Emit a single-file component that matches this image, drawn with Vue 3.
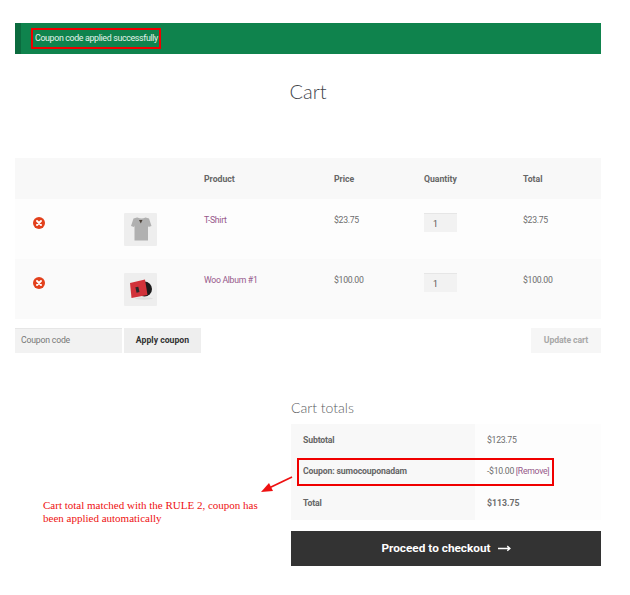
<template>
  <div class="page">
    <div class="notice">
      <span class="notice-text">Coupon code applied successfully</span>
    </div>

    <h1 class="title">Cart</h1>

    <div class="cart">
      <div class="row head">
        <div></div>
        <div></div>
        <div>Product</div>
        <div>Price</div>
        <div>Quantity</div>
        <div>Total</div>
      </div>
      <div v-for="item in items" :key="item.name" class="row item">
        <div>
          <svg class="remove" viewBox="0 0 12 12">
            <circle cx="6" cy="6" r="6" fill="#e2401c" />
            <path d="M4 4l4 4M8 4l-4 4" stroke="#fff" stroke-width="1.9" stroke-linecap="round" />
          </svg>
        </div>
        <div>
          <svg v-if="item.thumb == 'shirt'" class="thumb" viewBox="0 0 33 33">
            <rect width="33" height="33" rx="1" fill="#eeeeee" />
            <path d="M13 4.500l-3.500 1-2.500 7.500 3 1 .5-1.500v15h13.500v-15l.5 1.500 3-1-2.500-7.500-3.500-1q-4 1.800-8 0z" fill="#b0b0b0" />
            <path d="M15 7h3.500l-1.700 3.500z" fill="#4a4038" />
          </svg>
          <svg v-else class="thumb" viewBox="0 0 33 33">
            <rect width="33" height="33" rx="1" fill="#eeeeee" />
            <ellipse cx="20" cy="25.500" rx="9" ry="1.200" fill="#dedede" />
            <circle cx="20.500" cy="16" r="7.500" fill="#1c1a1b" />
            <path d="M6 10l15-3.500 2.500 15.500-16 3z" fill="#d1323a" />
            <rect x="12" y="14" width="3" height="5.500" fill="#2c2a2b" transform="rotate(-12 13 17)" />
          </svg>
        </div>
        <div><a class="link">{{ item.name }}</a></div>
        <div>{{ item.price }}</div>
        <div><span class="qty">1</span></div>
        <div>{{ item.price }}</div>
      </div>
    </div>

    <div class="actions">
      <div class="coupon">
        <span class="coupon-input">Coupon code</span>
        <span class="btn apply">Apply coupon</span>
      </div>
      <span class="btn update">Update cart</span>
    </div>

    <div class="bottom">
      <p class="note">Cart total matched with the RULE 2, coupon has been applied automatically</p>
      <div class="totals">
        <h2 class="totals-title">Cart totals</h2>
        <div class="totals-table">
          <div class="totals-row">
            <div class="label">Subtotal</div>
            <div class="value">$123.75</div>
          </div>
          <div class="totals-row">
            <div class="label">Coupon: sumocouponadam</div>
            <div class="value">-$10.00 <a class="link">[Remove]</a></div>
          </div>
          <div class="totals-row">
            <div class="label">Total</div>
            <div class="value strong">$113.75</div>
          </div>
          <div class="coupon-mark"></div>
        </div>
        <div class="checkout">
          Proceed to checkout
          <svg class="arrow" viewBox="0 0 14 8">
            <path d="M0 4.500h12.500M10 2l2.800 2.500-2.800 2.500" fill="none" stroke="#fff" stroke-width="1.500" />
          </svg>
        </div>
      </div>
    </div>

    <svg class="pointer" viewBox="0 0 32 17">
      <path d="M31 1L8 12" stroke="#ee1111" stroke-width="1.800" />
      <path d="M0 16l12-1-4-8z" fill="#ee1111" />
    </svg>
  </div>
</template>

<script setup>
const items = [
  { name: "T-Shirt", price: "$23.75", thumb: "shirt" },
  { name: "Woo Album #1", price: "$100.00", thumb: "album" },
];
</script>

<style>
html, body {
  background: #fff;
}
</style>

<style scoped>
.page {
  position: relative;
  box-sizing: border-box;
  width: 630px;
  height: 595px;
  padding: 23px 29px 0 15px;
  font-family: Roboto, Lato, sans-serif;
  font-size: 8.700px;
  letter-spacing: -0.3px;
  color: #6d6d6d;
  overflow: hidden;
}
.notice {
  display: flex;
  align-items: center;
  height: 31px;
  box-sizing: border-box;
  padding-left: 10px;
  background: #0f834d;
  border-left: 6px solid #0b6b3e;
}
.notice-text {
  box-sizing: border-box;
  width: 130px;
  padding: 2px;
  border: 2.500px solid #f00000;
  color: #e6f3ec;
  font-size: 8.800px;
  letter-spacing: -0.33px;
  line-height: 13px;
  white-space: nowrap;
}
.title {
  margin: 24px 0 0;
  height: 80px;
  text-align: center;
  font-family: Lato, sans-serif;
  font-size: 20px;
  letter-spacing: 0;
  line-height: 26px;
  font-weight: 300;
  color: #43454b;
}
.row {
  display: grid;
  grid-template-columns: 91px 80px 130px 90px 99px 96px;
}
.row > div {
  padding-left: 18px;
}
.head {
  height: 41px;
  align-items: center;
  background: #f8f8f8;
  font-weight: 700;
  letter-spacing: 0;
  color: #666;
}
.item {
  height: 60px;
  background: #fdfdfd;
  padding-top: 14px;
  box-sizing: border-box;
}
.item:last-child {
  background: #fafafa;
}
.item > div {
  line-height: 14px;
}
.remove {
  display: block;
  width: 12px;
  height: 12px;
  margin-top: 4px;
}
.thumb {
  display: block;
  width: 33px;
  height: 33px;
}
.link {
  color: #96588a;
}
.qty {
  display: block;
  box-sizing: border-box;
  width: 33px;
  height: 19px;
  padding-left: 9px;
  line-height: 20px;
  background: #f2f2f2;
  border-top: 1px solid #e6e6e6;
  color: #555;
}
.actions {
  display: flex;
  justify-content: space-between;
  margin-top: 9px;
}
.coupon {
  display: flex;
  gap: 2px;
}
.coupon-input {
  box-sizing: border-box;
  width: 107px;
  height: 25px;
  padding-left: 6px;
  line-height: 23px;
  background: #f2f2f2;
  border-top: 1px solid #e6e6e6;
  letter-spacing: -0.2px;
  color: #777;
}
.btn {
  box-sizing: border-box;
  height: 25px;
  line-height: 25px;
  text-align: center;
  font-weight: 700;
  letter-spacing: 0;
}
.apply {
  width: 77px;
  background: #eeeeee;
  color: #333;
}
.update {
  width: 70px;
  background: #f6f6f6;
  color: #a8a8a8;
  letter-spacing: -0.1px;
}
.bottom {
  display: flex;
  justify-content: space-between;
  margin-top: 46px;
}
.note {
  width: 225px;
  margin: 100px 0 0 28px;
  font-family: "Liberation Serif", serif;
  font-size: 11px;
  letter-spacing: 0;
  line-height: 13px;
  color: #ee1111;
}
.totals {
  width: 310px;
}
.totals-title {
  margin: 0;
  height: 25px;
  font-family: Lato, sans-serif;
  font-size: 14px;
  letter-spacing: 0;
  line-height: 18px;
  font-weight: 300;
  color: #5a5c61;
}
.totals-table {
  position: relative;
}
.totals-row {
  display: grid;
  grid-template-columns: 184px 126px;
  height: 31.330px;
  line-height: 33px;
}
.label {
  padding-left: 12px;
  background: #f8f8f8;
  font-weight: 700;
  letter-spacing: -0.15px;
  color: #666;
}
.value {
  padding-left: 12px;
  background: #fdfdfd;
}
.strong {
  font-weight: 700;
  letter-spacing: 0;
}
.coupon-mark {
  position: absolute;
  left: 6px;
  top: 34px;
  width: 257px;
  height: 28px;
  box-sizing: border-box;
  border: 2.500px solid #f00000;
}
.checkout {
  display: flex;
  align-items: center;
  justify-content: center;
  gap: 7px;
  height: 35px;
  margin-top: 13px;
  background: #333333;
  color: #fff;
  font-size: 11.800px;
  font-weight: 700;
  letter-spacing: 0;
}
.arrow {
  width: 13px;
  height: 8px;
}
.pointer {
  position: absolute;
  left: 261px;
  top: 476px;
  width: 32px;
  height: 17px;
}
</style>
